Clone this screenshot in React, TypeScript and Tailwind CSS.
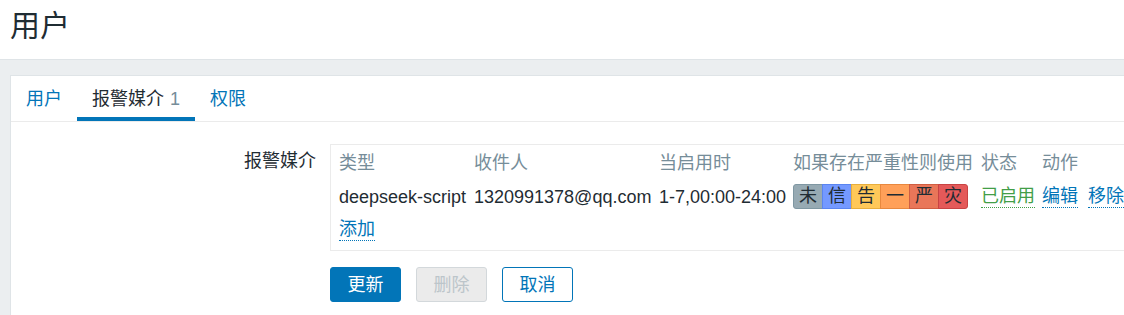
import React from "react";

const severities = [
  { label: "未", cls: "bg-[#97aab3] border-[#7f97a2] rounded-l-[3px]" },
  { label: "信", cls: "bg-[#7499ff] border-[#5a85f0] -ml-px" },
  { label: "告", cls: "bg-[#ffc859] border-[#e8ae3c] -ml-px" },
  { label: "一", cls: "bg-[#ffa059] border-[#e8883f] -ml-px" },
  { label: "严", cls: "bg-[#e97659] border-[#d05e42] -ml-px" },
  { label: "灾", cls: "bg-[#e45959] border-[#c84343] -ml-px rounded-r-[3px]" },
];

function Tabs() {
  return (
    <div className="flex h-[46px] border-b border-[#ebebeb]">
      <div className="flex items-center px-[15px] text-[#0275b8]">用户</div>
      <div className="flex items-center px-[15px] text-[#1f2c33] shadow-[inset_0_-4px_0_#0275b8]">
        报警媒介<span className="ml-[6px] text-[#768d99]">1</span>
      </div>
      <div className="flex items-center px-[15px] text-[#0275b8]">权限</div>
    </div>
  );
}

function MediaTable() {
  return (
    <div className="w-[860px] border border-r-0 border-[#ebebeb] pl-[8px] pt-[1px] pb-[3px]">
      <div className="flex h-[34px] items-center text-[#768d99]">
        <div className="w-[135px] shrink-0">类型</div>
        <div className="w-[185px] shrink-0">收件人</div>
        <div className="w-[134px] shrink-0">当启用时</div>
        <div className="w-[188px] shrink-0">如果存在严重性则使用</div>
        <div className="w-[61px] shrink-0">状态</div>
        <div className="shrink-0">动作</div>
      </div>
      <div className="flex h-[33px] items-center text-[#1f2c33]">
        <div className="w-[135px] shrink-0">deepseek-script</div>
        <div className="w-[185px] shrink-0">1320991378@qq.com</div>
        <div className="w-[134px] shrink-0">1-7,00:00-24:00</div>
        <div className="w-[188px] shrink-0">
          <div className="flex">
            {severities.map((s) => (
              <span
                key={s.label}
                className={"flex h-[25px] w-[30px] items-center justify-center border leading-[23px] " + s.cls}
              >
                {s.label}
              </span>
            ))}
          </div>
        </div>
        <div className="w-[61px] shrink-0">
          <span className="inline-block border-b border-dotted border-[#429e47] leading-[21px] text-[#429e47]">
            已启用
          </span>
        </div>
        <div className="flex shrink-0 gap-[10px]">
          <span className="inline-block border-b border-dotted border-[#0275b8] leading-[21px] text-[#0275b8]">
            编辑
          </span>
          <span className="inline-block border-b border-dotted border-[#0275b8] leading-[21px] text-[#0275b8]">
            移除
          </span>
        </div>
      </div>
      <div className="flex h-[34px] items-center">
        <span className="inline-block border-b border-dotted border-[#0275b8] leading-[21px] text-[#0275b8]">
          添加
        </span>
      </div>
    </div>
  );
}

export default function App() {
  return (
    <div className="h-[315px] w-[1124px] overflow-hidden bg-[#ebeef0] font-['Liberation_Sans','Noto_Sans_CJK_SC',sans-serif] text-[18px] leading-[22px] text-[#1f2c33]">
      <div className="h-[60px] border-b border-[#dfe4e7] bg-white pl-[10px] pt-[10px]">
        <h1 className="text-[30px] leading-[32px] text-[#1f2c33]">用户</h1>
      </div>
      <div className="ml-[10px] mt-[15px] h-[400px] w-[1200px] border border-[#dfe4e7] bg-white">
        <Tabs />
        <div className="mt-[22px] flex">
          <div className="w-[305px] shrink-0 pt-[6px] text-right">报警媒介</div>
          <div className="ml-[14px] shrink-0">
            <MediaTable />
            <div className="mt-[16px] flex gap-[15px]">
              <button className="h-[35px] w-[71px] rounded-[3px] border border-[#0275b8] bg-[#0275b8] text-white">
                更新
              </button>
              <button
                disabled
                className="h-[35px] w-[71px] rounded-[3px] border border-[#d3d8db] bg-[#ebebeb] text-[#bcc5ca]"
              >
                删除
              </button>
              <button className="h-[35px] w-[71px] rounded-[3px] border border-[#0275b8] bg-white text-[#0275b8]">
                取消
              </button>
            </div>
          </div>
        </div>
      </div>
    </div>
  );
}
